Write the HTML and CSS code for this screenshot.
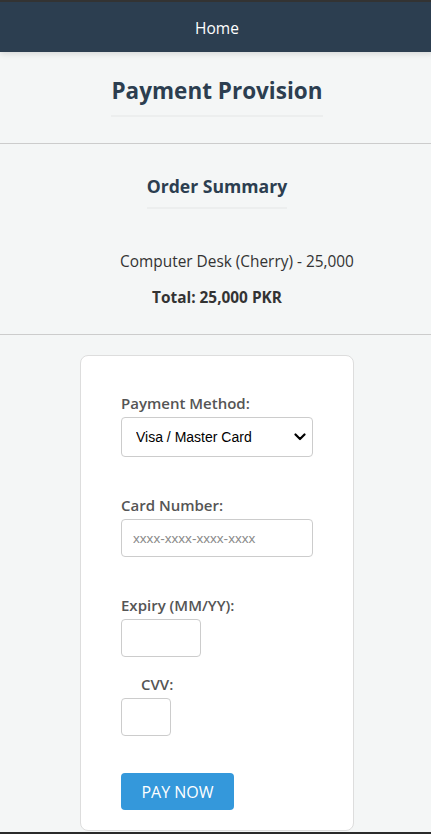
FILE: index.html
```html
<!DOCTYPE html>
<html lang="en">
<head>
<meta charset="utf-8">
<title>Payment Provision</title>
<link rel="stylesheet" href="styles.css">
</head>
<body>
<nav class="nav">
  <a class="nav-link" href="#">Home</a>
</nav>
<header class="page-head">
  <h1 class="title">Payment Provision</h1>
</header>
<hr class="rule">
<section class="summary">
  <h2 class="subtitle">Order Summary</h2>
  <ul class="items">
    <li>Computer Desk (Cherry) - 25,000</li>
  </ul>
  <p class="total">Total: 25,000 PKR</p>
</section>
<hr class="rule">
<form class="card">
  <div class="field">
    <label class="label" for="method">Payment Method:</label>
    <div class="select-wrap">
      <select class="select" id="method">
        <option>Visa / Master Card</option>
      </select>
      <svg class="chevron" width="12" height="8" viewBox="0 0 12 8" aria-hidden="true"><path d="M1.5 1.5 L6 6 L10.5 1.5" fill="none" stroke="#000" stroke-width="2.2" stroke-linecap="round" stroke-linejoin="round"/></svg>
    </div>
  </div>
  <div class="field">
    <label class="label" for="card">Card Number:</label>
    <input class="input input-wide" id="card" type="text" placeholder="xxxx-xxxx-xxxx-xxxx">
  </div>
  <div class="field">
    <label class="label" for="exp">Expiry (MM/YY):</label>
    <input class="input input-exp" id="exp" type="text">
    <label class="label label-cvv" for="cvv">CVV:</label>
    <input class="input input-cvv" id="cvv" type="text">
  </div>
  <button class="pay" type="button">PAY NOW</button>
</form>
<footer class="foot"></footer>
</body>
</html>
```
FILE: styles.css
```css
html {
  margin: 0;
  padding: 0;
  overflow: hidden;
}
body {
  margin: 0;
  padding: 0;
  width: 434px;
  background: #f4f6f6;
  font-family: "Open Sans", "Noto Sans", sans-serif;
  color: #333;
  border-top: 2px solid #333;
}
.nav {
  height: 50px;
  background: #2c3e50;
  display: flex;
  align-items: center;
  justify-content: center;
  box-shadow: 0 2px 6px rgba(0,0,0,0.12);
}
.nav-link {
  color: #fff;
  text-decoration: none;
  font-size: 15.5px;
  line-height: 22px;
  padding-top: 2px;
}
.page-head {
  text-align: center;
  padding-top: 23px;
}
.title {
  display: inline-block;
  margin: 0;
  font-size: 22.5px;
  line-height: 32px;
  color: #2c3e50;
  font-weight: 700;
  padding-bottom: 8px;
  border-bottom: 2px solid #eceeee;
}
.rule {
  border: 0;
  border-top: 1px solid #ccc;
  margin: 26px 0 0;
}
.summary {
  text-align: center;
  padding-top: 29px;
}
.subtitle {
  display: inline-block;
  margin: 0;
  font-size: 17.6px;
  line-height: 26px;
  color: #2c3e50;
  font-weight: 700;
  padding-bottom: 8px;
  border-bottom: 2px solid #eceeee;
}
.items {
  margin: 42px 0 0;
  padding-left: 40px;
  list-style: none;
  font-size: 15.4px;
  line-height: 22px;
}
.total {
  margin: 14px 0 0;
  font-size: 15.4px;
  line-height: 22px;
  font-weight: 700;
}
.summary + .rule {
  margin-top: 25px;
}
.card {
  width: 192px;
  margin: 20px auto 0;
  background: #fff;
  border: 1px solid #ddd;
  border-radius: 8px;
  padding: 36px 40px 20px 40px;
}
.field {
  margin-bottom: 37px;
}
.label {
  display: block;
  font-size: 15px;
  line-height: 22px;
  font-weight: 600;
  color: #555;
  margin-bottom: 3px;
}
.label-cvv {
  margin: 16px 0 3px 20px;
}
.select, .input {
  display: block;
  box-sizing: border-box;
  border: 1px solid #ccc;
  border-radius: 4px;
  background: #fff;
  font-family: "Liberation Sans", Arial, sans-serif;
  font-size: 14px;
}
.select-wrap {
  position: relative;
  width: 192px;
}
.select {
  width: 192px;
  height: 40px;
  padding: 0 12px 0 14px;
  color: #000;
  appearance: none;
  -webkit-appearance: none;
}
.chevron {
  position: absolute;
  right: 7px;
  top: 16px;
  pointer-events: none;
}
.input {
  height: 38px;
  padding: 0 11px;
}
.input::placeholder {
  color: #8a8a8a;
  font-size: 13.6px;
}
.input-wide { width: 192px; }
.input-exp { width: 80px; }
.input-cvv { width: 50px; }
.pay {
  display: block;
  width: 113px;
  height: 37px;
  background: #3498db;
  color: #fff;
  border: 0;
  border-radius: 4px;
  font-family: "Open Sans", "Noto Sans", sans-serif;
  font-size: 16px;
}
.foot {
  height: 3px;
  margin-top: 1px;
  background: #2a2a2a;
}
```
